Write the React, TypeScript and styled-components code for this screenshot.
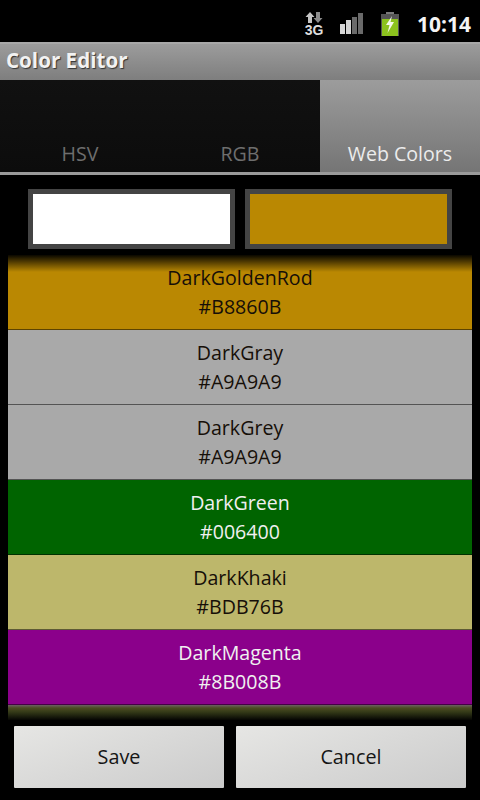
import styled, { createGlobalStyle } from 'styled-components';

const GlobalStyle = createGlobalStyle`
  html, body {
    margin: 0;
    padding: 0;
    background: #000;
  }
  * {
    box-sizing: border-box;
  }
`;

const Screen = styled.div`
  width: 480px;
  height: 800px;
  overflow: hidden;
  background: #000;
  display: flex;
  flex-direction: column;
  font-family: "Open Sans", "Noto Sans", sans-serif;
`;

const StatusBar = styled.div`
  height: 42px;
  background: #000;
  display: flex;
  align-items: center;
  justify-content: flex-end;
  padding-right: 9px;
  padding-top: 5px;
`;

const NetworkIcon = styled.div`
  width: 18px;
  height: 24px;
  margin-right: 17px;
  display: flex;
  flex-direction: column;
  align-items: center;
`;

const NetworkLabel = styled.span`
  font-size: 14px;
  line-height: 12px;
  font-weight: 700;
  color: #dcdcdc;
  font-family: "Liberation Sans", sans-serif;
`;

const BatterySvg = styled.svg`
  margin-left: 17px;
`;

const Clock = styled.span`
  font-size: 21px;
  font-weight: 700;
  color: #f4f4f4;
  margin-left: 18px;
`;

const TitleBar = styled.div`
  height: 38px;
  background: linear-gradient(#9c9c9c, #7e7e7e);
  border-top: 2px solid #a8a8a8;
  display: flex;
  align-items: center;
  padding: 0 0 4px 6px;
  font-size: 20.6px;
  font-weight: 700;
  color: #f2f2f2;
  text-shadow: 1px 1px 1px #333;
`;

const TabBar = styled.div`
  height: 95px;
  display: grid;
  grid-template-columns: 160px 160px 160px;
  border-bottom: 3px solid #9a9a9a;
  background: #0d0d0d;
`;

const Tab = styled.div<{ $active?: boolean }>`
  display: flex;
  align-items: flex-end;
  justify-content: center;
  padding-bottom: 5px;
  font-size: 19.6px;
  line-height: 27px;
  color: ${(props) => (props.$active ? '#ececec' : '#6e6e6e')};
  background: ${(props) => (props.$active ? 'linear-gradient(#9c9c9c, #757575)' : 'linear-gradient(#111, #0c0c0c)')};
`;

const SwatchRow = styled.div`
  display: flex;
  gap: 10px;
  padding: 14px 28px 6px 28px;
`;

const Swatch = styled.div<{ $color: string }>`
  flex: 1;
  height: 60px;
  background: ${(props) => props.$color};
  border: 5px solid #444;
`;

const ColorList = styled.div`
  position: relative;
  margin: 0 8px;
  height: 465px;
  overflow: hidden;
  display: flex;
  flex-direction: column;
`;

const ColorRow = styled.div<{ $color: string; $light?: boolean }>`
  flex: none;
  height: 75px;
  background: ${(props) => props.$color};
  color: ${(props) => (props.$light ? '#f0f0f0' : '#160f08')};
  border-bottom: 1px solid rgba(0, 0, 0, 0.5);
  display: flex;
  flex-direction: column;
  align-items: center;
  justify-content: center;
  font-size: 19.6px;
  line-height: 29px;
`;

const TopFade = styled.div`
  position: absolute;
  top: 0;
  left: 0;
  right: 0;
  height: 17px;
  background: linear-gradient(rgba(0, 0, 0, 0.95), rgba(0, 0, 0, 0));
`;

const BottomFade = styled.div`
  position: absolute;
  bottom: 0;
  left: 0;
  right: 0;
  height: 15px;
  background: linear-gradient(#6b5f64 0, #4c4c22 3px, #343a18 7px, #050503 100%);
`;

const ButtonRow = styled.div`
  display: flex;
  gap: 12px;
  padding: 6px 14px 0 14px;
`;

const Button = styled.button<{ $width: number }>`
  width: ${(props) => props.$width}px;
  height: 62px;
  border: none;
  border-radius: 1px;
  background: linear-gradient(160deg, #e6e6e4, #cbcbcb);
  color: #151515;
  font-family: inherit;
  font-size: 19.8px;
  padding: 0 0 2px 0;
`;

const colors = [
  { name: 'DarkGoldenRod', hex: '#B8860B', fill: '#ba8802' },
  { name: 'DarkGray', hex: '#A9A9A9', fill: '#a9a9a9' },
  { name: 'DarkGrey', hex: '#A9A9A9', fill: '#a9a9a9' },
  { name: 'DarkGreen', hex: '#006400', fill: '#006400', light: true },
  { name: 'DarkKhaki', hex: '#BDB76B', fill: '#bdb76b' },
  { name: 'DarkMagenta', hex: '#8B008B', fill: '#8b008b', light: true },
];

function NetworkGlyph() {
  return (
    <NetworkIcon>
      <svg width="18" height="12" viewBox="0 0 18 12">
        <path d="M5 0 L9.5 5 H7 V11 H3 V5 H0.5 Z" fill="#c4c4c4" />
        <path d="M13 11 L8.5 6 H11 V0 H15 V6 H17.5 Z" fill="#8c8c8c" />
      </svg>
      <NetworkLabel>3G</NetworkLabel>
    </NetworkIcon>
  );
}

function SignalGlyph() {
  return (
    <svg width="24" height="22" viewBox="0 0 24 22">
      <rect x="0" y="11" width="5" height="10" fill="#d8d8d8" />
      <rect x="6" y="7" width="5" height="14" fill="#d4d4d4" />
      <rect x="12" y="4" width="5" height="17" fill="#6a6a6a" />
      <rect x="18" y="0" width="5" height="21" fill="#6a6a6a" />
    </svg>
  );
}

function BatteryGlyph() {
  return (
    <BatterySvg width="18" height="24" viewBox="0 0 18 24">
      <rect x="5" y="0" width="8" height="3" fill="#7a7a7a" />
      <rect x="0" y="2" width="18" height="22" fill="#555" />
      <rect x="1" y="7" width="16" height="17" fill="#8cc21e" />
      <path d="M11 4 L5 13 H8.5 L6.5 21 L13 10 H9.5 Z" fill="#f4f8e8" />
    </BatterySvg>
  );
}

export default function App() {
  return (
    <Screen>
      <GlobalStyle />
      <StatusBar>
        <NetworkGlyph />
        <SignalGlyph />
        <BatteryGlyph />
        <Clock>10:14</Clock>
      </StatusBar>
      <TitleBar>Color Editor</TitleBar>
      <TabBar>
        <Tab>HSV</Tab>
        <Tab>RGB</Tab>
        <Tab $active>Web Colors</Tab>
      </TabBar>
      <SwatchRow>
        <Swatch $color="#ffffff" />
        <Swatch $color="#ba8802" />
      </SwatchRow>
      <ColorList>
        {colors.map((color) => (
          <ColorRow key={color.name} $color={color.fill} $light={color.light}>
            <span>{color.name}</span>
            <span>{color.hex}</span>
          </ColorRow>
        ))}
        <BottomFade />
        <TopFade />
      </ColorList>
      <ButtonRow>
        <Button $width={210}>Save</Button>
        <Button $width={230}>Cancel</Button>
      </ButtonRow>
    </Screen>
  );
}
